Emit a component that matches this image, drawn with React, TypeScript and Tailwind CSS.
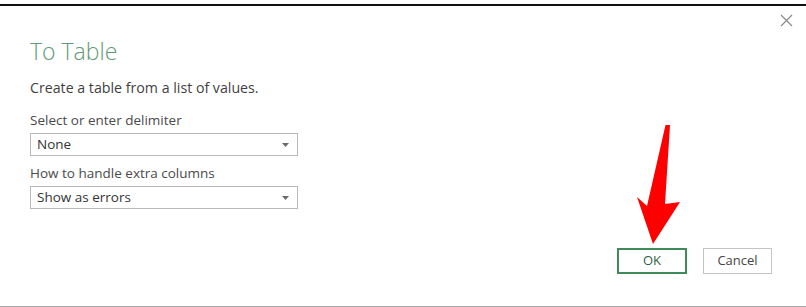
import React from "react";

const font = { fontFamily: '"Open Sans", "Noto Sans", sans-serif' };

function Caret() {
  return (
    <svg width="7" height="4" viewBox="0 0 7 4" className="shrink-0">
      <path d="M0 0h7L3.5 4z" fill="#6b6b6b" />
    </svg>
  );
}

function Field({ label, value }: { label: string; value: string }) {
  return (
    <div className="flex flex-col">
      <div className="text-[13.5px] leading-[20px] text-[#4a4a4a]">{label}</div>
      <div className="mt-[3px] flex h-[23px] w-[268px] items-center justify-between border border-[#b9b9b9] bg-white pl-[6px] pr-[8px] text-[13.5px] text-[#333]">
        <span>{value}</span>
        <Caret />
      </div>
    </div>
  );
}

export default function App() {
  return (
    <div className="flex h-[307px] w-[806px] flex-col bg-white" style={font}>
      <div className="h-[4px]" />
      <div className="relative flex flex-1 flex-col border-t-2 border-b border-t-[#111] border-b-[#a8a8a8]">
        {/* close button */}
        <svg
          className="absolute right-[13px] top-[8px]"
          width="13"
          height="13"
          viewBox="0 0 13 13"
        >
          <path d="M1 1l11 11M12 1L1 12" stroke="#8a8a8a" strokeWidth="1.2" />
        </svg>

        <div className="flex flex-col pl-[30px] pt-[30px]">
          <h1 className="text-[23px] font-light leading-[30px] text-[#5f9a76]">
            To Table
          </h1>
          <p className="mt-[12px] text-[14.2px] leading-[20px] text-[#3f3f3f]">
            Create a table from a list of values.
          </p>
          <div className="mt-[12px] flex flex-col gap-[7px]">
            <Field label="Select or enter delimiter" value="None" />
            <Field label="How to handle extra columns" value="Show as errors" />
          </div>
        </div>

        <div className="mt-auto mb-[32px] flex justify-end gap-[16px] pr-[34px]">
          <button className="h-[26px] w-[70px] border-2 border-[#3f8a5c] bg-white text-[13px] text-[#2f5f44]">
            OK
          </button>
          <button className="h-[26px] w-[69px] border border-[#c4c4c4] bg-white text-[13px] text-[#444]">
            Cancel
          </button>
        </div>

        {/* red pointer arrow */}
        <svg
          className="pointer-events-none absolute left-[630px] top-[113px]"
          width="60"
          height="135"
          viewBox="630 119 60 135"
        >
          <path
            d="M665.5 125 L670 125 L665 204 L680 202 L653 244 L637 197 L647 206 Z"
            fill="#ff0000"
          />
        </svg>
      </div>
    </div>
  );
}
